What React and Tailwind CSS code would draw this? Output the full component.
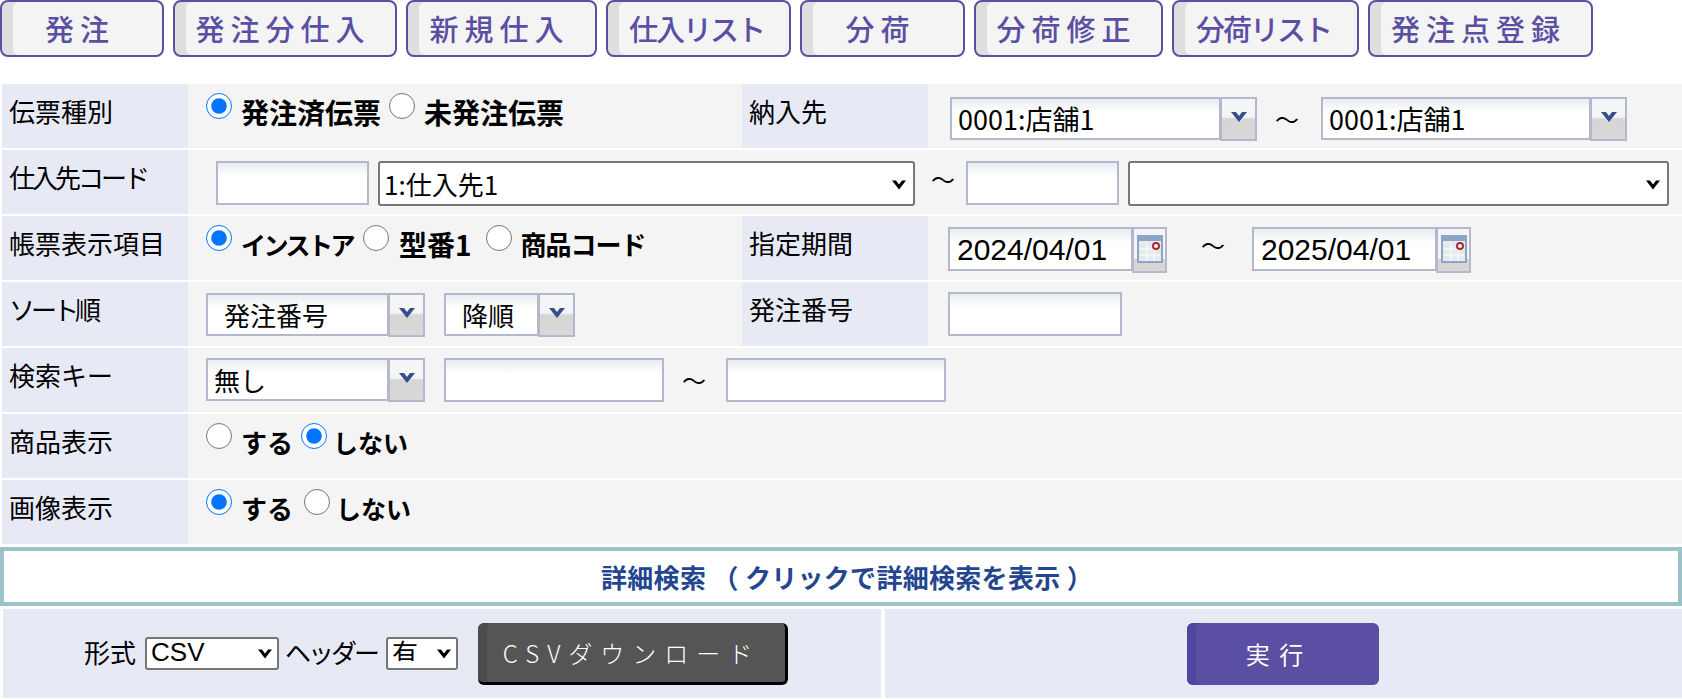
const navButtons = [
  { label: '発注', w: 'w-[164px]' },
  { label: '発注分仕入', w: 'w-[224px]' },
  { label: '新規仕入', w: 'w-[191px]' },
  { label: '仕入リスト', w: 'w-[185px]', tight: true },
  { label: '分荷', w: 'w-[165px]' },
  { label: '分荷修正', w: 'w-[189px]' },
  { label: '分荷リスト', w: 'w-[187px]', tight: true },
  { label: '発注点登録', w: 'w-[225px]' },
];

const fieldBg = 'border-2 border-[#b5b8cd] bg-[linear-gradient(#e9edf0,#ffffff_35%)]';

function Label({ children, className = '' }) {
  return (
    <div className={`w-[186px] h-full shrink-0 bg-[#e7eaf5] pl-[7px] pt-[10px] text-[26px] leading-[34px] text-black whitespace-nowrap ${className}`}>
      {children}
    </div>
  );
}

function Radio({ name, checked, children, className = 'text-[28px]', textClass = '' }) {
  return (
    <label className={`flex items-start font-bold leading-[34px] text-black mr-[8px] whitespace-nowrap ${className}`}>
      <input type="radio" name={name} defaultChecked={checked} className="w-[26px] h-[26px] m-0 mt-[-1px] mr-[9px]" />
      <span className={`mt-[1px] ${textClass}`}>{children}</span>
    </label>
  );
}

function ArrowBox({ children }) {
  return (
    <div className="w-[37px] h-[44px] ml-[-1px] flex items-start justify-center border-2 border-[#b5b8cd] bg-[linear-gradient(#f4f5f6,#f4f5f6_45%,#d6d6d6_50%,#d8d8d8)]">
      {children}
    </div>
  );
}

function Combo({ w, text, indent = 'pl-[6px]', size = 'text-[26px]' }) {
  return (
    <div className="flex items-start shrink-0">
      <div className={`${w} h-[43px] ${fieldBg} ${indent} ${size} leading-[40px] text-black overflow-hidden whitespace-nowrap`}>{text}</div>
      <ArrowBox>
        <svg width="20" height="14" viewBox="0 0 20 14" className="mt-[11px]">
          <path d="M2 2h5l3 4 3-4h5l-8 10z" fill="#34508c" />
        </svg>
      </ArrowBox>
    </div>
  );
}

function DateField({ value }) {
  return (
    <div className="flex items-start shrink-0">
      <div className={`w-[185px] h-[44px] ${fieldBg} pl-[7px] text-[30px] leading-[42px] text-black font-['Liberation_Sans',sans-serif]`}>{value}</div>
      <div className="w-[35px] h-[46px] ml-[-1px] flex justify-center border-2 border-[#b5b8cd] bg-[linear-gradient(#f4f5f6,#f4f5f6_70%,#d6d6d6_72%)]">
        <svg width="26" height="28" viewBox="0 0 26 28" className="mt-[6px]">
          <rect x="1" y="1" width="24" height="26" fill="#e6e8ec" stroke="#8ba5c8" strokeWidth="2" />
          <rect x="1" y="1" width="24" height="5" fill="#8ba5c8" />
          <path d="M3 14h20M3 20h20M10 8v18M17 8v18" stroke="#f7f7f7" strokeWidth="1.5" />
          <circle cx="19" cy="11" r="3" fill="#fff" stroke="#a02c30" strokeWidth="2" />
        </svg>
      </div>
    </div>
  );
}

function TextBox({ w, h = 'h-[44px]' }) {
  return <input type="text" className={`${w} ${h} ${fieldBg} shrink-0 outline-none`} />;
}

function Tilde({ className = '' }) {
  return <span className={`text-[24px] leading-[30px] text-black shrink-0 ${className}`}>～</span>;
}

function Chevron({ className = '' }) {
  return (
    <svg width="16" height="11" viewBox="0 0 16 11" className={`absolute pointer-events-none ${className}`}>
      <path d="M1 1.5h4l3 4 3-4h4l-7 9z" fill="#000" />
    </svg>
  );
}

function NativeSelect({ w, h = 'h-[45px]', className = '', selectClass = '', arrow = 'right-[8px] top-[18px]', children }) {
  return (
    <div className={`relative shrink-0 ${className}`}>
      <select className={`${w} ${h} block bg-white border-2 border-[#767676] rounded-[3px] pl-[4px] text-black appearance-none ${selectClass}`}>
        {children}
      </select>
      <Chevron className={arrow} />
    </div>
  );
}

function Row({ children }) {
  return <div className="flex h-[64px] bg-[#f4f4f4] gap-[2px]">{children}</div>;
}

export default function App() {
  return (
    <div className="w-[1682px] h-[699px] overflow-hidden bg-white font-['Noto_Sans_CJK_JP',sans-serif]">
      {/* メニュー */}
      <div className="flex gap-[9px] h-[57px]">
        {navButtons.map((b) => (
          <button
            key={b.label}
            className={`${b.w} h-[57px] shrink-0 rounded-[8px] border-2 border-[#5a4fa2] bg-[#f4f4f4] shadow-[inset_11px_0_0_#dedede] pr-[4px] text-[29px] font-medium whitespace-nowrap text-[#5a4fa2] ${b.tight ? 'tracking-[-2px]' : 'tracking-[6px]'}`}
          >
            {b.label}
          </button>
        ))}
      </div>

      {/* 検索条件 */}
      <div className="mt-[27px] pl-[2px] flex flex-col gap-[2px] bg-white">
        <Row>
          <Label>伝票種別</Label>
          <div className="w-[550px] flex pl-[16px] pt-[10px]">
            <Radio name="slip" checked>発注済伝票</Radio>
            <Radio name="slip">未発注伝票</Radio>
          </div>
          <Label>納入先</Label>
          <div className="flex-1 flex items-start pl-[20px] pt-[13px]">
            <Combo w="w-[271px]" text="0001:店舗1" size="text-[27px]" />
            <Tilde className="ml-[18px] mr-[22px] mt-[7px]" />
            <Combo w="w-[270px]" text="0001:店舗1" size="text-[27px]" />
          </div>
        </Row>
        <Row>
          <Label className="tracking-[-3px]">仕入先コード</Label>
          <div className="flex-1 flex items-start pl-[26px] pt-[11px]">
            <TextBox w="w-[153px]" />
            <NativeSelect w="w-[537px]" className="ml-[9px] text-[26px]">
              <option>1:仕入先1</option>
            </NativeSelect>
            <Tilde className="ml-[16px] mr-[11px] mt-[3px]" />
            <TextBox w="w-[153px]" />
            <NativeSelect w="w-[541px]" className="ml-[9px] text-[26px]">
              <option></option>
            </NativeSelect>
          </div>
        </Row>
        <Row>
          <Label>帳票表示項目</Label>
          <div className="w-[550px] flex pl-[16px] pt-[10px]">
            <Radio name="item" checked className="text-[25px] tracking-[-2.5px] pr-[2px]">インストア</Radio>
            <Radio name="item" className="text-[28px] pr-[6px]" textClass="ml-[1px]">型番1</Radio>
            <Radio name="item" className="text-[26px] tracking-[-1px]">商品コード</Radio>
          </div>
          <Label>指定期間</Label>
          <div className="flex-1 flex items-start pl-[18px] pt-[11px]">
            <DateField value="2024/04/01" />
            <Tilde className="ml-[34px] mr-[27px] mt-[3px]" />
            <DateField value="2025/04/01" />
          </div>
        </Row>
        <Row>
          <Label className="tracking-[-4px]">ソート順</Label>
          <div className="w-[550px] flex items-start pl-[16px] pt-[11px]">
            <Combo w="w-[183px]" text="発注番号" indent="pl-[16px]" />
            <div className="ml-[19px]">
              <Combo w="w-[95px]" text="降順" indent="pl-[16px]" />
            </div>
          </div>
          <Label>発注番号</Label>
          <div className="flex-1 flex items-start pl-[18px] pt-[10px]">
            <TextBox w="w-[174px]" />
          </div>
        </Row>
        <Row>
          <Label>検索キー</Label>
          <div className="flex-1 flex items-start pl-[16px] pt-[10px]">
            <Combo w="w-[183px]" text="無し" />
            <TextBox w="w-[220px] ml-[19px]" />
            <Tilde className="ml-[18px] mr-[20px] mt-[7px]" />
            <TextBox w="w-[220px]" />
          </div>
        </Row>
        <Row>
          <Label>商品表示</Label>
          <div className="flex-1 flex pl-[16px] pt-[10px]">
            <Radio name="goods" className="text-[26px]">する</Radio>
            <Radio name="goods" checked className="text-[25px]" textClass="-ml-[3px]">しない</Radio>
          </div>
        </Row>
        <Row>
          <Label>画像表示</Label>
          <div className="flex-1 flex pl-[16px] pt-[10px]">
            <Radio name="image" checked className="text-[26px] pr-[3px]">する</Radio>
            <Radio name="image" className="text-[25px]" textClass="-ml-[3px]">しない</Radio>
          </div>
        </Row>
      </div>

      {/* 詳細検索 */}
      <div className="mt-[3px] h-[59px] border-[4px] border-[#9cc3ca] bg-white flex items-center justify-center pl-[12px] text-[26px] tracking-[0.3px] font-bold text-[#23468f] whitespace-nowrap">
        詳細検索 （ クリックで詳細検索を表示 ）
      </div>

      {/* 出力 */}
      <div className="mt-[3px] pl-[3px] flex gap-[4px] h-[89px]">
        <div className="w-[878px] h-full bg-[#e7eaf5] flex items-start pl-[81px] pt-[14px]">
          <span className="text-[26px] leading-[30px] text-black mt-[14px]">形式</span>
          <NativeSelect
            w="w-[134px]"
            h="h-[33px]"
            className="ml-[9px] mt-[14px] text-[26px] font-['Liberation_Sans',sans-serif]"
            selectClass="leading-[26px] py-0 pb-[3px]"
            arrow="right-[6px] top-[11px]"
          >
            <option>CSV</option>
          </NativeSelect>
          <span className="text-[26px] leading-[30px] text-black ml-[6px] mt-[14px] tracking-[-3px]">ヘッダー</span>
          <NativeSelect
            w="w-[72px]"
            h="h-[33px]"
            className="ml-[9px] mt-[14px] text-[26px]"
            selectClass="leading-[26px] py-0 pb-[7px]"
            arrow="right-[6px] top-[11px]"
          >
            <option>有</option>
          </NativeSelect>
          <button className="w-[310px] h-[62px] ml-[20px] rounded-[6px] bg-[#555555] border-b-[3px] border-r-[3px] border-black shadow-[inset_9px_0_0_#4c4c4c] text-[24px] font-light tracking-[8px] text-white whitespace-nowrap">
            CSVダウンロード
          </button>
        </div>
        <div className="flex-1 h-full bg-[#e7eaf5] flex justify-center items-start pt-[14px]">
          <button className="w-[192px] h-[62px] ml-[-2px] pr-[14px] rounded-[6px] bg-[#5a4fa2] shadow-[inset_9px_0_0_#5247a0] text-[24px] tracking-[2px] text-white">
            実 行
          </button>
        </div>
      </div>
    </div>
  );
}
